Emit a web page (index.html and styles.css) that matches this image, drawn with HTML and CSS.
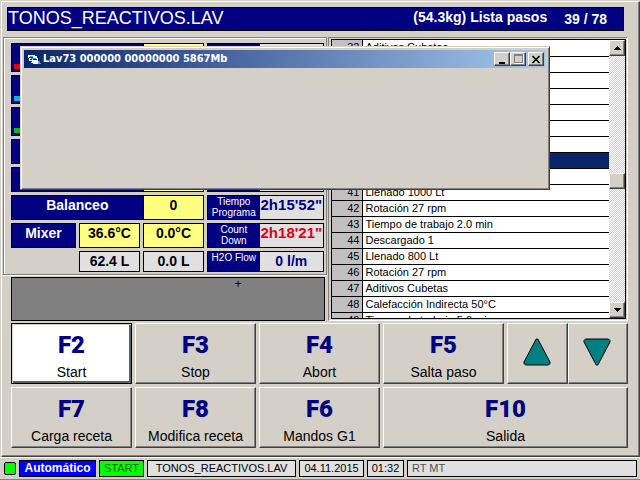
FILE: index.html
```
<!DOCTYPE html>
<html lang="es">
<head>
<meta charset="utf-8">
<title>TONOS_REACTIVOS.LAV</title>
<link rel="stylesheet" href="styles.css">
</head>
<body>
<main class="screen">
  <header class="topbar">
    <h1 class="recipe">TONOS_REACTIVOS.LAV</h1>
    <div class="steps-info"><span>(54.3kg) Lista pasos</span><span class="step-count">39 / 78</span></div>
  </header>

  <div class="panels">
    <div class="left">
      <section class="readings">
        <div class="pair wide tall"><span class="name"><i class="mark red"></i></span><span class="val yellow"></span></div>
        <div class="pair tall"><span class="name"></span><span class="val"></span></div>
        <div class="pair wide tall"><span class="name"><i class="mark cyan"></i></span><span class="val yellow"></span></div>
        <div class="pair tall"><span class="name"></span><span class="val"></span></div>
        <div class="pair wide tall"><span class="name"><i class="mark green"></i></span><span class="val yellow"></span></div>
        <div class="pair tall"><span class="name"></span><span class="val"></span></div>
        <div class="pair wide"><span class="name"></span><span class="val yellow"></span></div>
        <div class="pair"><span class="name"></span><span class="val"></span></div>
        <div class="pair wide"><span class="name"></span><span class="val yellow"></span></div>
        <div class="pair"><span class="name"></span><span class="val"></span></div>
        <div class="pair wide"><span class="name">Balanceo</span><span class="val yellow">0</span></div>
        <div class="pair"><span class="name small">Tiempo<br>Programa</span><span class="val time">2h15'52"</span></div>
        <div class="cell name">Mixer</div>
        <div class="cell val yellow">36.6°C</div>
        <div class="cell val yellow">0.0°C</div>
        <div class="pair"><span class="name small">Count<br>Down</span><span class="val time alert">2h18'21"</span></div>
        <div class="cell val short second">62.4 L</div>
        <div class="cell val short">0.0 L</div>
        <div class="pair short"><span class="name small">H2O Flow</span><span class="val flow">0 l/m</span></div>
      </section>
      <div class="message">+</div>
    </div>

    <section class="steps">
      <div class="steps-view">
        <table class="step-table">
          <tbody>
            <tr><th scope="row">32</th><td>Aditivos Cubetas</td></tr>
            <tr><th scope="row">33</th><td></td></tr>
            <tr><th scope="row">34</th><td></td></tr>
            <tr><th scope="row">35</th><td></td></tr>
            <tr><th scope="row">36</th><td></td></tr>
            <tr><th scope="row">37</th><td></td></tr>
            <tr><th scope="row">38</th><td></td></tr>
            <tr class="current"><th scope="row">39</th><td></td></tr>
            <tr><th scope="row">40</th><td></td></tr>
            <tr><th scope="row">41</th><td>Llenado 1000 Lt</td></tr>
            <tr><th scope="row">42</th><td>Rotación 27 rpm</td></tr>
            <tr><th scope="row">43</th><td>Tiempo de trabajo 2.0 min</td></tr>
            <tr><th scope="row">44</th><td>Descargado 1</td></tr>
            <tr><th scope="row">45</th><td>Llenado 800 Lt</td></tr>
            <tr><th scope="row">46</th><td>Rotación 27 rpm</td></tr>
            <tr><th scope="row">47</th><td>Aditivos Cubetas</td></tr>
            <tr><th scope="row">48</th><td>Calefacción Indirecta 50°C</td></tr>
            <tr><th scope="row">49</th><td>Tiempo de trabajo 5.0 min</td></tr>
          </tbody>
        </table>
        <div class="scrollbar">
          <button class="scroll-btn" aria-label="Subir"><svg viewBox="0 0 7 4" width="7" height="4" shape-rendering="crispEdges"><path d="M3 0h1v1h1v1h1v1h1v1H0V3h1V2h1V1h1z"/></svg></button>
          <div class="track-above"></div>
          <div class="thumb"></div>
          <div class="track-below"></div>
          <button class="scroll-btn" aria-label="Bajar"><svg viewBox="0 0 7 4" width="7" height="4" shape-rendering="crispEdges"><path d="M0 0h7v1H6v1H5v1H4v1H3V3H2V2H1V1H0z"/></svg></button>
        </div>
      </div>
    </section>
  </div>

  <nav class="keys">
    <button class="key active"><b>F2</b><span>Start</span></button>
    <button class="key"><b>F3</b><span>Stop</span></button>
    <button class="key"><b>F4</b><span>Abort</span></button>
    <button class="key"><b>F5</b><span>Salta paso</span></button>
    <div class="arrows">
      <button class="key arrow" aria-label="Paso anterior"><svg width="28" height="28" viewBox="0 0 28 28"><path d="M13.2 1h1.6L27 24v1.500L25.500 27h-23L1 25.500V24z" fill="#008080" stroke="#000"/></svg></button>
      <button class="key arrow" aria-label="Paso siguiente"><svg width="28" height="28" viewBox="0 0 28 28"><path d="M2.500 1h23L27 2.500V4L14.800 27h-1.600L1 4V2.500z" fill="#008080" stroke="#000"/></svg></button>
    </div>
    <button class="key"><b>F7</b><span>Carga receta</span></button>
    <button class="key"><b>F8</b><span>Modifica receta</span></button>
    <button class="key"><b>F6</b><span>Mandos G1</span></button>
    <button class="key double"><b>F10</b><span>Salida</span></button>
  </nav>

  <section class="dialog" role="dialog" aria-labelledby="dialog-title">
    <div class="titlebar">
      <svg class="app-icon" width="13" height="11" viewBox="0 0 13 11" shape-rendering="crispEdges"><path d="M0 1h7v1h2v2h1v6H5V9H3V7H1V4H0z" fill="#fff"/><path d="M2 2h3v1H2zM3 4h5v1H3z" fill="#20b0b8"/><path d="M1 3h4v1H1zM2 5h2v1H2zM5 5h4v1H5zM3 7h1v1H3z" fill="#102030"/><path d="M10 7h2v2h1v1h-3z" fill="#8090a0"/></svg>
      <h2 id="dialog-title">Lav73 000000 00000000 5867Mb</h2>
      <button class="win-btn" aria-label="Minimizar"><svg width="11" height="9" viewBox="0 0 11 9"><path d="M2 7h6v2H2z"/></svg></button>
      <button class="win-btn" aria-label="Maximizar" disabled><svg width="11" height="10" viewBox="0 0 11 10" shape-rendering="crispEdges"><path d="M2 1h9v9H2z" fill="#fff"/><path d="M1 0h9v9H1zM2 2v6h7V2z" fill="#808080" fill-rule="evenodd"/><path d="M2 2h7v6H2z" fill="#d4d0c8"/></svg></button>
      <button class="win-btn close" aria-label="Cerrar"><svg width="10" height="9" viewBox="0 0 10 9"><path d="M1.5 1l7 7M8.500 1l-7 7" stroke="#000" stroke-width="1.6"/></svg></button>
    </div>
  </section>
</main>

<footer class="status">
  <span class="lamp"></span>
  <span class="item mode">Automático</span>
  <span class="item start">START</span>
  <span class="item file">TONOS_REACTIVOS.LAV</span>
  <span class="item date">04.11.2015</span>
  <span class="item clock">01:32</span>
  <span class="item rest">RT MT</span>
</footer>
</body>
</html>
```
FILE: styles.css
```
* { box-sizing: border-box; }

:root {
  --face: #d4d0c8;
  --navy: #000080;
  --yellow: #ffff80;
  --light: #e0e0e0;
}

body {
  margin: 0;
  min-height: 100vh;
  display: flex;
  flex-direction: column;
  background: var(--face);
  color: #000;
  font-family: "Liberation Sans", Arial, sans-serif;
  font-size: 12px;
}

button {
  margin: 0;
  padding: 0;
  border: 0;
  font: inherit;
  color: inherit;
  background: var(--face);
}

h1, h2 { margin: 0; }

.screen {
  position: relative;
  flex: 1;
  margin: 1px 0 0 1px;
  border: 1px solid;
  border-color: #fff #404040 #404040 #fff;
  box-shadow: inset -1px -1px #808080;
}

/* Header */
.topbar {
  display: grid;
  grid-template-columns: 356fr 261fr;
  height: 24px;
  margin: 5px 15px 0 5px;
  border: 1px solid #000;
  background: var(--navy);
  color: #fff;
}

.recipe {
  font-size: 18px;
  line-height: 20px;
  font-weight: normal;
  white-space: nowrap;
}

.steps-info {
  display: flex;
  justify-content: flex-end;
  gap: 17px;
  padding-right: 16px;
  border-left: 1px solid #000;
  font-size: 14px;
  line-height: 18px;
  font-weight: bold;
  white-space: nowrap;
}

.step-count { padding-top: 2px; }

/* Panels */
.panels {
  display: grid;
  grid-template-columns: 325fr 300fr;
  margin: 6px 11px 0 1px;
}

.readings {
  display: grid;
  grid-template-columns: 65fr 61fr 61fr 117fr;
  gap: 3px;
  margin-right: 1px;
  padding: 5px 2px 2px 7px;
  border: 1px solid #808080;
  box-shadow: inset 1px 1px #fff, 0 1px #fff;
}

.pair {
  display: grid;
  grid-template-columns: 53fr 65fr;
  height: 25px;
  min-width: 0;
  border: 1px solid #000;
  background: var(--light);
}

.wide {
  grid-column: span 3;
  grid-template-columns: 132fr 61fr;
}

.tall { height: 29px; }

.cell {
  height: 25px;
  border: 1px solid #000;
}

.short { height: 21px; }

.second { grid-column: 2; }

.name,
.val {
  position: relative;
  min-width: 0;
  font-size: 14px;
  line-height: 18px;
  font-weight: bold;
  text-align: center;
  white-space: nowrap;
}

.name {
  background: var(--navy);
  color: #fff;
}

.val { background: var(--light); }

.yellow { background: var(--yellow); }

.pair .yellow { border-left: 1px solid #000; }

.small {
  font-size: 10px;
  line-height: 11px;
  font-weight: normal;
}

.time {
  color: var(--navy);
  font-size: 15px;
}

.alert { color: #e00018; }

.flow { color: var(--navy); }

.mark {
  position: absolute;
  left: 2px;
  bottom: 2px;
  width: 12px;
  height: 5px;
}

.red { background: #e80000; }
.cyan { background: #18b0d0; }
.green { background: #18b018; }

.message {
  height: 44px;
  margin: 2px 3px 0 8px;
  padding-left: 140px;
  border: 1px solid #000;
  background: #808080;
  text-align: center;
  line-height: 12px;
}

/* Step list */
.steps {
  display: flex;
  contain: size;
  padding: 1px 1px 1px 2px;
  border: 1px solid;
  border-color: #808080 #fff #fff #808080;
}

.steps-view {
  flex: 1;
  display: flex;
  overflow: hidden;
  border: 1px solid #000;
}

.step-table {
  flex: 1;
  align-self: flex-start;
  border-collapse: collapse;
  background: #fff;
  font-size: 11px;
}

.step-table tr { height: 16px; }

.step-table th,
.step-table td {
  height: 16px;
  padding: 0 3px;
  border-bottom: 1px solid #000;
  line-height: 15px;
  font-weight: normal;
  text-align: left;
  white-space: nowrap;
}

.step-table th {
  width: 30px;
  padding: 0 2px;
  border-right: 1px solid #000;
  background: #c0c0c0;
  text-align: right;
}

.step-table .current td { background: #0a246a; }

.scrollbar {
  display: flex;
  flex-direction: column;
  width: 16px;
  background: repeating-conic-gradient(#fff 0 25%, var(--face) 0 50%) 0 0 / 2px 2px;
}

.scroll-btn,
.thumb,
.win-btn {
  display: flex;
  align-items: center;
  justify-content: center;
  background: var(--face);
  border: 1px solid;
  border-color: #fff #404040 #404040 #fff;
  box-shadow: inset -1px -1px #808080;
}

.scroll-btn,
.thumb { height: 16px; }

.track-above { flex: 117; }
.track-below { flex: 114; }

/* Function keys */
.keys {
  display: grid;
  grid-template-columns: repeat(5, 1fr);
  gap: 3px;
  margin: 2px 11px 8px 9px;
}

.key {
  display: flex;
  flex-direction: column;
  align-items: center;
  height: 61px;
  padding-top: 9px;
  border: 1px solid;
  border-color: #fff #404040 #404040 #fff;
  box-shadow: inset -1px -1px #808080;
  font-size: 14px;
  line-height: 16px;
}

.key b {
  color: var(--navy);
  font-family: "Liberation Sans Narrow", Roboto, sans-serif;
  font-size: 24px;
  line-height: 24px;
  font-weight: 900;
}

.key span { margin-top: 7px; }

.active {
  border-color: #000;
  background: #fff;
  box-shadow: inset 1px 1px #d4d0c8, inset -2px -2px #606060;
}

.arrows { display: flex; }

.arrow {
  flex: 1;
  justify-content: center;
  padding: 0 1px 3px 0;
}

.double { grid-column: span 2; }

/* Floating window */
.dialog {
  position: absolute;
  top: 44px;
  left: 18px;
  right: 89px;
  height: 144px;
  padding: 2px;
  border: 1px solid;
  border-color: var(--face) #404040 #404040 var(--face);
  box-shadow: inset 1px 1px #fff, inset -1px -1px #808080;
  background: var(--face);
}

.titlebar {
  display: flex;
  align-items: center;
  height: 18px;
  margin: 1px;
  padding: 0 2px 0 4px;
  background: linear-gradient(90deg, #0a246a, #a6caf0);
  color: #fff;
}

.titlebar h2 {
  flex: 1;
  margin-left: 2px;
  font-family: "DejaVu Sans Condensed", "DejaVu Sans", sans-serif;
  font-size: 11px;
  line-height: 18px;
}

.win-btn {
  width: 16px;
  height: 14px;
}

.close { margin-left: 2px; }

/* Status bar */
.status {
  display: flex;
  gap: 3px;
  height: 23px;
  padding: 2px 3px 2px 4px;
  border-top: 1px solid #fff;
  border-bottom: 1px solid #808080;
}

.lamp {
  width: 12px;
  height: 13px;
  margin-top: 2px;
  border: 1px solid #000;
  border-radius: 2px;
  background: #00ff00;
}

.item {
  height: 17px;
  border: 1px solid #000;
  background: var(--light);
  font-size: 11px;
  line-height: 15px;
  text-align: center;
  white-space: nowrap;
}

.mode {
  flex: 0 0 77px;
  background: #0000ff;
  color: #fff;
  font-size: 12px;
  font-weight: bold;
}

.start {
  flex: 0 0 45px;
  background: #00ff00;
  color: #006000;
}

.file { flex: 0 0 149px; }
.date { flex: 0 0 65px; }
.clock { flex: 0 0 37px; }

.rest {
  flex: 1;
  padding-left: 4px;
  color: #505050;
  text-align: left;
}
```
